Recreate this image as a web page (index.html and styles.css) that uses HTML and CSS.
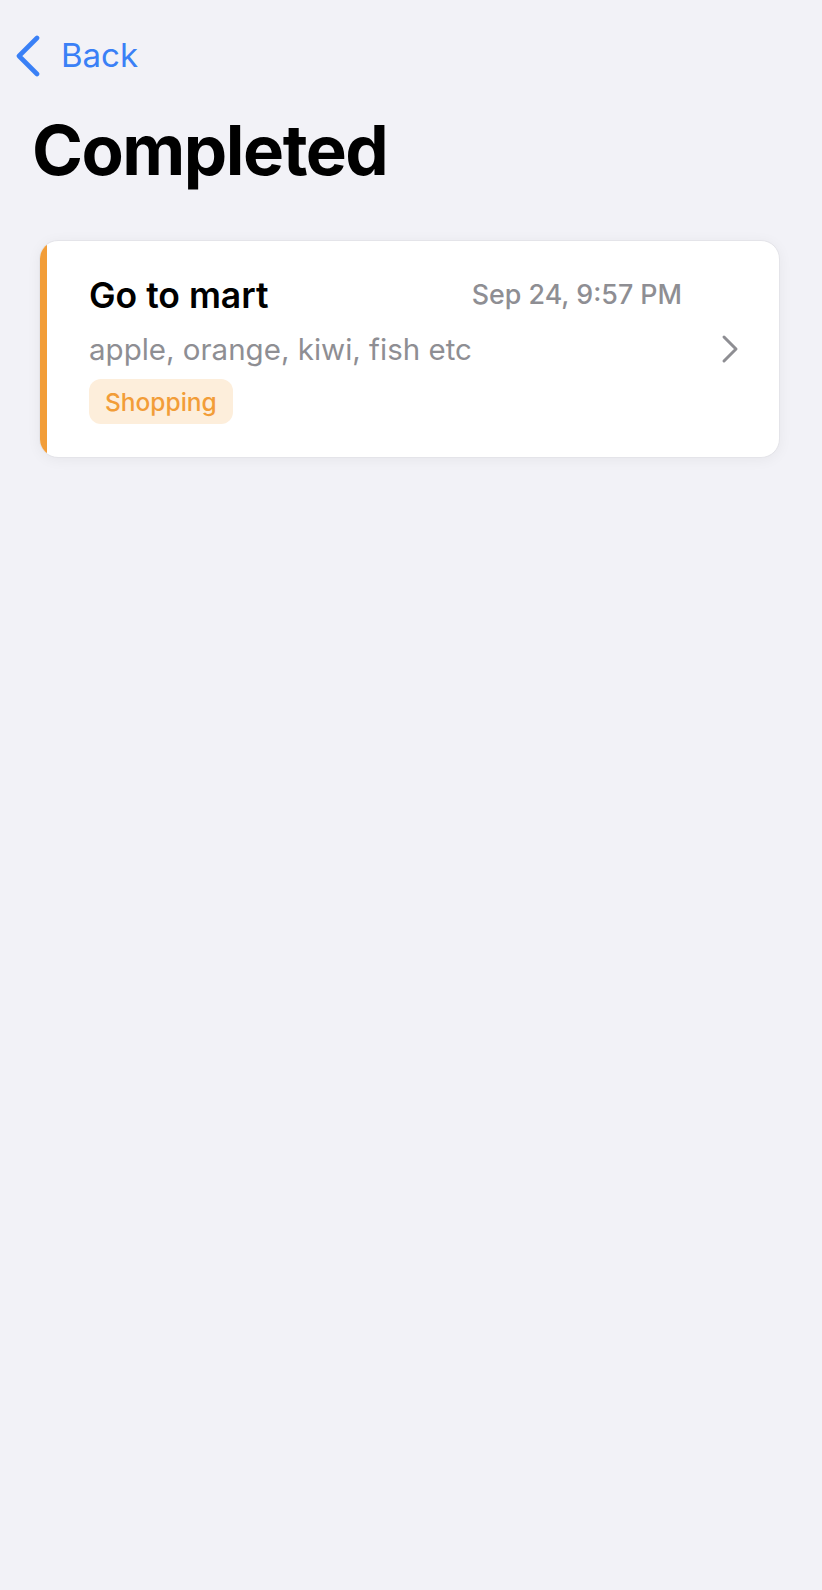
FILE: index.html
```html
<!DOCTYPE html>
<html lang="en">
<head>
<meta charset="utf-8">
<title>Completed</title>
<link rel="stylesheet" href="styles.css">
</head>
<body>
<div class="screen">
  <nav class="nav">
    <a class="back" href="#">
      <svg class="back-icon" width="26" height="42" viewBox="0 0 26 42" aria-hidden="true">
        <path d="M22 3 L4 21 L22 39" fill="none" stroke="currentColor" stroke-width="4.6" stroke-linecap="round" stroke-linejoin="round"/>
      </svg>
      <span class="back-label">Back</span>
    </a>
  </nav>
  <h1 class="title">Completed</h1>
  <div class="card">
    <div class="card-bar"></div>
    <div class="card-main">
      <div class="card-head">
        <span class="card-title">Go to mart</span>
        <span class="card-date">Sep 24, 9:57 PM</span>
      </div>
      <div class="card-desc">apple, orange, kiwi, fish etc</div>
      <span class="badge">Shopping</span>
    </div>
    <div class="card-chevron">
      <svg width="18" height="30" viewBox="0 0 18 30" aria-hidden="true">
        <path d="M3 3 L15 15 L3 27" fill="none" stroke="currentColor" stroke-width="3" stroke-linecap="round" stroke-linejoin="round"/>
      </svg>
    </div>
  </div>
</div>
</body>
</html>
```
FILE: styles.css
```css
* { box-sizing: border-box; }
html, body {
  margin: 0;
  padding: 0;
  background: #f2f2f7;
}
body {
  font-family: Inter, "Noto Sans", "Liberation Sans", sans-serif;
  color: #000;
}
.screen {
  min-height: 1590px;
}
.nav {
  padding-top: 35px;
  height: 76px;
}
.back {
  display: flex;
  align-items: center;
  color: #3a80f6;
  text-decoration: none;
  height: 41px;
}
.back-icon {
  margin-left: 15px;
  flex: none;
}
.back-label {
  margin-left: 20px;
  font-size: 33px;
  line-height: 41px;
  font-weight: 400;
}
.title {
  margin: 32px 0 0 32px;
  font-size: 69px;
  line-height: 84px;
  font-weight: 700;
  letter-spacing: -1.5px;
}
.card {
  margin: 48px 42px 0 39px;
  height: 218px;
  display: flex;
  background: #fff;
  border: 1px solid #e4e4e9;
  border-radius: 19px;
  overflow: hidden;
  box-shadow: 0 2px 14px rgba(0, 0, 0, 0.05);
}
.card-bar {
  width: 7px;
  flex: none;
  background: #f29d38;
}
.card-main {
  flex: 1;
  padding: 34px 0 0 42px;
  display: flex;
  flex-direction: column;
  align-items: flex-start;
}
.card-head {
  width: 100%;
  display: flex;
  justify-content: space-between;
  align-items: flex-start;
}
.card-title {
  font-size: 35.5px;
  line-height: 41px;
  font-weight: 600;
}
.card-date {
  margin-top: 3px;
  font-size: 26.8px;
  line-height: 32px;
  font-weight: 500;
  color: #8e8e93;
}
.card-desc {
  margin-top: 15px;
  font-size: 29.5px;
  line-height: 36px;
  color: #8e8e93;
}
.badge {
  margin-top: 12px;
  height: 45px;
  padding: 0 16px;
  display: flex;
  align-items: center;
  font-size: 24.5px;
  font-weight: 500;
  color: #f29d38;
  background: #fdeedb;
  border-radius: 12px;
}
.card-chevron {
  width: 97px;
  flex: none;
  display: flex;
  align-items: center;
  justify-content: flex-end;
  padding-right: 40px;
  color: #8e8e93;
}
```
